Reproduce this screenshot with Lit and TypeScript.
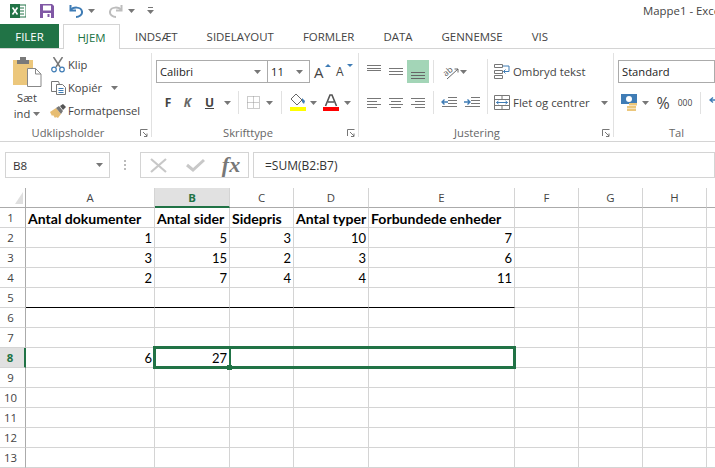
import { LitElement, html, css, svg } from "lit";
import { customElement } from "lit/decorators.js";
import { classMap } from "lit/directives/class-map.js";

const caret = html`<svg class="caret" width="7" height="4" viewBox="0 0 7 4"><path d="M0 0h7L3.5 4z" fill="#777"/></svg>`;
const lines = (rows: [number, number, number][], color = "#777") =>
  html`<svg width="16" height="14" viewBox="0 0 16 14" fill="none" stroke=${color} stroke-width="1">${rows.map(([y, a, b]) => svg`<path d="M${a} ${y + 0.5}H${b}"/>`)}</svg>`;
const launcher = html`<svg class="launcher" width="8" height="8" viewBox="0 0 8 8" fill="none" stroke="#777"><path d="M.5 7V.5H7.5"/><path d="M3 3l4 4M7 4.5V7.5H4" /></svg>`;

const COLS = [
  { l: "A", w: 129 }, { l: "B", w: 75 }, { l: "C", w: 64 }, { l: "D", w: 75 },
  { l: "E", w: 146 }, { l: "F", w: 64 }, { l: "G", w: 64 }, { l: "H", w: 64 }, { l: "", w: 20 },
];
const DATA: Record<number, (string | number)[]> = {
  1: ["Antal dokumenter", "Antal sider", "Sidepris", "Antal typer", "Forbundede enheder"],
  2: [1, 5, 3, 10, 7],
  3: [3, 15, 2, 3, 6],
  4: [2, 7, 4, 4, 11],
  8: [6, 27],
};

@customElement("app-root")
export class AppRoot extends LitElement {
  static styles = css`
    :host { display: block; width: 715px; height: 468px; overflow: hidden; background: #fff; position: relative;
      font-family: "Open Sans", "Noto Sans", sans-serif; font-size: 11.2px; color: #444; }
    svg { display: block; flex: none; }
    .title { height: 24px; display: flex; align-items: center; position: relative; }
    .qat { display: grid; grid-template-columns: 10px 16px 14px 14px 15px 14px 16px 10px 14px 16px 7px 8px; place-items: center; padding-top: 1px; margin-top: -4px; }
    .doc-title { position: absolute; left: 643px; top: 3px; white-space: nowrap; font-size: 11.4px; color: #444; }
    .tabs { height: 24px; display: flex; border-bottom: 1px solid #d4d4d4; font-size: 11.45px; position: relative; }
    .tab { display: flex; align-items: center; justify-content: center; height: 24px; box-sizing: border-box; flex: none; }
    .filer { width: 59px; background: #217346; color: #fff; margin-right: 4px; }
    .hjem { width: 57px; height: 25px; border: 1px solid #d4d4d4; border-bottom: none; background: #fff; color: #217346; margin-right: 15px; position: relative; z-index: 1; }
    .tab.plain { margin-right: 29px; }
    .ribbon { height: 92px; display: flex; border-bottom: 1px solid #d4d4d4; }
    .group { position: relative; display: flex; flex-direction: column; box-sizing: border-box; margin-top: 4px; height: 84px; border-right: 1px solid #e1e1e1; flex: none; }
    .g1 { width: 152px; } .g2 { width: 207px; } .g3 { width: 255px; } .g4 { flex: 1 1 0; min-width: 0; border-right: none; }
    .body { flex: 1; min-height: 0; display: flex; }
    .label { height: 17px; line-height: 17px; margin-bottom: -4px; text-align: center; color: #666; font-size: 11.2px; }
    .g1 .label { padding-right: 15px; } .g2 .label { padding-right: 14px; } .g3 .label { padding-right: 18px; } .g4 .label { padding-left: 24px; }
    .launcher { position: absolute; right: 3px; bottom: 0; }
    .paste { width: 50px; display: flex; flex-direction: column; align-items: center; padding: 4px 0 0 4px; box-sizing: border-box; }
    .paste .txt { text-align: center; line-height: 16px; margin-top: 3px; }
    .paste .ind { display: flex; align-items: center; justify-content: center; gap: 3px; }
    .clip { display: flex; flex-direction: column; }
    .clip-row { height: 23px; display: flex; align-items: center; gap: 2px; white-space: nowrap; }
    .clip-row .ic { width: 16px; display: flex; justify-content: center; }
    .clip-row .caret { margin-left: 7px; }
    .col { display: flex; flex-direction: column; }
    .combos { display: flex; padding: 7px 0 0 4px; align-items: center; }
    .combo { height: 23px; box-sizing: border-box; border: 1px solid #ababab; display: flex; align-items: center; justify-content: space-between; padding: 0 6px 0 3px;
      font-size: 11.2px; color: #222; background: #fff; }
    .font { width: 112px; } .size { width: 43px; margin-left: -1px; }
    .std { width: 120px; }
    .grow { display: flex; align-items: center; gap: 8px; margin-left: 4px; }
    .growA { position: relative; font-size: 15px; line-height: 16px; width: 14px; color: #444; }
    .growB { font-size: 12px; }
    .tri { position: absolute; right: -3px; top: 0; }
    .fontrow { display: grid; grid-template-columns: 20px 19px 25px 10px 12px 18px 15px 9px 23px 9px 25px 9px; place-items: center; padding: 8px 0 0 6px; height: 23px; }
    .b { font-weight: 700; font-size: 12px; color: #444; }
    .k { font-style: italic; font-weight: 700; font-size: 12px; color: #666; }
    .u { font-weight: 700; font-size: 12px; color: #444; text-decoration: underline; }
    .sep { width: 1px; height: 23px; background: #e1e1e1; }
    .aligns { display: grid; grid-template-columns: 22px 22px 22px 4px 1px 6px 20px 7px; grid-auto-rows: 23px; row-gap: 8px; place-items: center; padding: 7px 0 0 4px; align-content: start; }
    .al-on { background: #a3d5b7; width: 22px; height: 23px; display: flex; align-items: center; justify-content: center; }
    .indent { grid-column: 7 / 9; display: flex; gap: 7px; justify-self: start; margin-left: 1px; }
    .tallsep { width: 1px; height: 55px; background: #e1e1e1; margin: 6px 0 0 20px; }
    .wrap { display: flex; flex-direction: column; gap: 8px; padding: 7px 0 0 6px; }
    .wrap-row { display: flex; align-items: center; height: 23px; gap: 3px; white-space: nowrap; font-size: 11.4px; }
    .wrap-row .caret { margin-left: 8px; }
    .talrow { display: grid; grid-template-columns: 22px 10px 26px 18px 12px 20px; place-items: center; padding: 8px 0 0 4px; height: 23px; }
    .pct { font-size: 16px; color: #444; }
    .k000 { font-size: 8.5px; color: #444; }
    .sep22 { width: 1px; height: 22px; background: #e1e1e1; }
    .orient { overflow: visible; }
    .abtxt { font-family: "Open Sans", sans-serif; font-size: 8.5px; fill: #555; }
    .fbar { height: 46px; display: flex; align-items: center; box-sizing: border-box; padding: 10px 0 10px 5px; }
    .name, .fxbox, .fx { height: 26px; box-sizing: border-box; border: 1px solid #d4d4d4; display: flex; align-items: center; background: #fff; }
    .name { width: 105px; padding: 0 6px 0 7px; justify-content: space-between; color: #333; font-size: 11.6px; }
    .dots { width: 30px; display: flex; flex-direction: column; align-items: center; gap: 2px; }
    .dots i { width: 2px; height: 2px; background: #bbb; display: block; }
    .fxbox { width: 109px; display: grid; grid-template-columns: 35px 38px 34px; place-items: center; }
    .fxt { font-family: "Liberation Serif", serif; font-style: italic; font-weight: 700; font-size: 22px; line-height: 22px; color: #777; }
    .fx { flex: 1; margin-left: 4px; padding-left: 11px; color: #333; font-size: 12px; }
    .sheet { display: grid; grid-auto-rows: 20px; position: relative; grid-template-columns: 26px 129px 75px 64px 75px 146px 64px 64px 64px 20px; font-family: Lato, "Liberation Sans", sans-serif; font-size: 13px; color: #000; }
    .cell { box-sizing: border-box; border-right: 1px solid #d4d4d4; border-bottom: 1px solid #d4d4d4; padding: 0 2px; line-height: 20px; white-space: nowrap; overflow: visible; }
    .num { text-align: right; }
    .bold { font-weight: 700; font-size: 14.05px; line-height: 21px; }
    .line { border-bottom-color: #000; }
    .rh { border-right-color: #ababab; text-align: center; padding: 0 4px 0 0; color: #444; font-family: "Open Sans", sans-serif; font-size: 11.4px; }
    .ch { border-bottom-color: #ababab; text-align: center; color: #444; font-family: "Open Sans", sans-serif; font-size: 11.4px; line-height: 19px; }
    .corner { position: relative; border-right-color: #ababab; border-bottom-color: #ababab; padding: 0; }
    .corner svg { position: absolute; left: 15px; top: 4px; }
    .ch.on { background: #e1e1e1; color: #217346; font-weight: 700; border-bottom: 2px solid #217346; }
    .rh.on { background: #e1e1e1; color: #217346; font-weight: 700; border-right: 2px solid #217346; }
    .sel { position: absolute; left: 153px; top: 158px; width: 363px; height: 23px; box-sizing: border-box; border: 3px solid #217346; pointer-events: none; }
    .sel-mid { position: absolute; left: 73px; top: 0; width: 2px; height: 17px; background: #217346; }
    .sel-h { position: absolute; left: 71px; top: 16px; width: 5px; height: 5px; background: #217346; }
  `;

  private cells() {
    const out = [];
    out.push(html`<div class="cell corner"><svg width="8" height="12" viewBox="0 0 8 12"><path d="M8 0v12H0z" fill="#dfdfdf"/></svg></div>`);
    COLS.forEach((c) => out.push(html`<div class=${classMap({ cell: true, ch: true, on: c.l === "B" })}>${c.l}</div>`));
    for (let r = 1; r <= 13; r++) {
      out.push(html`<div class=${classMap({ cell: true, rh: true, on: r === 8 })}>${r}</div>`);
      COLS.forEach((_, i) => {
        const v = DATA[r]?.[i];
        out.push(html`<div class=${classMap({
          cell: true,
          bold: r === 1,
          num: typeof v === "number",
          line: r === 5 && i < 5,
        })}>${v ?? ""}</div>`);
      });
    }
    return out;
  }

  render() {
    return html`
      <div class="title">
        <div class="qat">
          <span></span>
          <svg width="16" height="14" viewBox="0 0 16 14"><rect x="6" y="1" width="10" height="12" fill="#fff" stroke="#217346"/><path d="M10 4h4M10 7h4M10 10h4" stroke="#217346"/><rect y="0" width="10" height="14" fill="#217346"/><path d="M2.5 3.5l5 7M7.5 3.5l-5 7" stroke="#fff" stroke-width="1.6"/></svg>
          <span></span>
          <svg width="14" height="14" viewBox="0 0 14 14"><path d="M0 0h12l2 2v12H0z" fill="#8058a5"/><rect x="3" y="1.5" width="8" height="5" fill="#fff"/><rect x="3" y="9" width="8" height="5" fill="#fff"/><rect x="7.5" y="10" width="2" height="3" fill="#8058a5"/></svg>
          <span></span>
          <svg width="14" height="14" viewBox="0 0 14 14" fill="none" stroke="#3f7cb5" stroke-width="2"><path d="M1.5 6.5C4 2.5 12 2.5 13 7.5 13.5 11 10 13 7 13"/><path d="M1.5 1v5.5H7" /></svg>
          ${caret}
          <span></span>
          <svg width="14" height="14" viewBox="0 0 14 14" fill="none" stroke="#bdbdbd" stroke-width="2"><path d="M12.5 6.5C10 2.5 2 2.5 1 7.5.5 11 4 13 7 13"/><path d="M12.5 1v5.5H7"/></svg>
          ${caret}
          <span></span>
          <svg width="7" height="8" viewBox="0 0 7 8"><path d="M1 .5h5" stroke="#777"/><path d="M0 3h7L3.5 7z" fill="#777"/></svg>
        </div>
        <div class="doc-title">Mappe1 - Excel</div>
      </div>
      <div class="tabs">
        <div class="tab filer">FILER</div>
        <div class="tab hjem">HJEM</div>
        ${["INDSÆT", "SIDELAYOUT", "FORMLER", "DATA", "GENNEMSE", "VIS"].map((t) => html`<div class="tab plain">${t}</div>`)}
      </div>
      <div class="ribbon">
        <div class="group g1">
          <div class="body">
            <div class="paste">
              <svg width="29" height="30" viewBox="0 0 29 30"><rect x="0" y="3" width="20" height="25" fill="#ecc77c"/><path d="M7 3V0h6v3h3v4H4V3z" fill="#7a7a7a"/><path d="M14.5 11.5h8l5.500 5.500v12.500h-13.500z" fill="#fff" stroke="#888"/><path d="M22.500 11.500v5.500h5.500" fill="none" stroke="#888"/></svg>
              <div class="txt">Sæt<div class="ind">ind ${caret}</div></div>
            </div>
            <div class="clip">
              <div class="clip-row"><span class="ic"><svg width="14" height="16" viewBox="0 0 14 16" fill="none"><path d="M2.500 0l6.500 10M11.500 0L5 10" stroke="#777" stroke-width="1.500"/><circle cx="3" cy="12.500" r="2.300" stroke="#3f7cb5" stroke-width="1.200"/><circle cx="11" cy="12.500" r="2.300" stroke="#3f7cb5" stroke-width="1.200"/></svg></span>Klip</div>
              <div class="clip-row"><span class="ic"><svg width="15" height="14" viewBox="0 0 15 14" fill="none"><path d="M5.500 10.500H.5V.5h7l1 3" stroke="#777"/><path d="M5.500 3.500h6l3 3v7h-9z" fill="#fff" stroke="#777"/><path d="M7.500 7.500h5M7.500 9.500h5M7.500 11.500h5" stroke="#3f7cb5"/></svg></span>Kopiér ${caret}</div>
              <div class="clip-row"><span class="ic"><svg width="16" height="14" viewBox="0 0 16 14"><path d="M0 8l6-4 5 6-3 4-2-1-1 1-2-3-1 1z" fill="#e7bd72"/><path d="M6 4l5 6 2-3-4-5z" fill="#777"/><path d="M10 2l3-2 3 3-3 3z" fill="#555"/></svg></span>Formatpensel</div>
            </div>
          </div>
          <div class="label">Udklipsholder</div>${launcher}
        </div>
        <div class="group g2">
          <div class="body col">
            <div class="combos">
              <div class="combo font">Calibri ${caret}</div>
              <div class="combo size">11 ${caret}</div>
              <div class="grow">
                <div class="growA">A<svg class="tri" width="6" height="3" viewBox="0 0 6 3"><path d="M0 3h6L3 0z" fill="#3f7cb5"/></svg></div>
                <div class="growA growB">A<svg class="tri" width="6" height="3" viewBox="0 0 6 3"><path d="M0 0h6L3 3z" fill="#3f7cb5"/></svg></div>
              </div>
            </div>
            <div class="fontrow">
              <span class="b">F</span><span class="k">K</span><span class="u">U</span>${caret}<span class="sep"></span>
              <svg width="13" height="13" viewBox="0 0 13 13" fill="none" stroke="#999" stroke-dasharray="1 1"><path d="M.5.500h12v12H.5zM.5 6.500h12M6.500.500v12"/></svg>
              ${caret}<span class="sep"></span>
              <svg width="16" height="19" viewBox="0 0 16 19"><path d="M6 1l6 6-5 5-6-6z" fill="#fff" stroke="#666"/><path d="M12 5l3 3-1 3-2-2z" fill="#3f7cb5"/><rect y="14" width="16" height="4" fill="#ffff00"/></svg>
              ${caret}
              <svg width="16" height="19" viewBox="0 0 16 19"><path d="M2.500 13L7 2h2l4.500 11M5 9h6" fill="none" stroke="#555" stroke-width="1.600"/><rect y="14" width="16" height="4" fill="#ff0000"/></svg>
              ${caret}
            </div>
          </div>
          <div class="label">Skrifttype</div>${launcher}
        </div>
        <div class="group g3">
          <div class="body">
            <div class="aligns">
              ${lines([[0, 1, 15], [3, 1, 15], [5, 1, 15]])}
              ${lines([[3, 1, 15], [6, 1, 15], [9, 1, 15]])}
              <div class="al-on">${lines([[7, 1, 15], [10, 1, 15], [13, 1, 15]], "#666")}</div>
              <span></span><span class="sep"></span><span></span>
              <svg class="orient" width="18" height="16" viewBox="0 0 18 16" fill="none"><text class="abtxt" x="2" y="11" transform="rotate(-40 6 8)">ab</text><path d="M6 15L17 5" stroke="#666"/><path d="M13.500 5H17v3.500" stroke="#666"/></svg>
              ${caret}
              ${lines([[2, 1, 15], [5, 1, 11], [8, 1, 15], [11, 1, 11]])}
              ${lines([[2, 1, 15], [5, 3, 13], [8, 1, 15], [11, 3, 13]])}
              ${lines([[2, 1, 15], [5, 5, 15], [8, 1, 15], [11, 5, 15]])}
              <span></span><span class="sep"></span><span></span>
              <div class="indent">
                <svg width="16" height="12" viewBox="0 0 16 12" fill="none" stroke="#777"><path d="M7 .5h9M7 3.500h9M7 6.500h9M1 9.500h15"/><path d="M7 5H1M3.500 2.500L1 5l2.500 2.500" stroke="#3f7cb5" stroke-width="1.400"/></svg>
                <svg width="16" height="12" viewBox="0 0 16 12" fill="none" stroke="#777"><path d="M7 .5h9M7 3.500h9M7 6.500h9M1 9.500h15"/><path d="M0 5h6M3.500 2.500L6 5 3.500 7.500" stroke="#3f7cb5" stroke-width="1.400"/></svg>
              </div>
            </div>
            <div class="tallsep"></div>
            <div class="wrap">
              <div class="wrap-row"><svg width="16" height="15" viewBox="0 0 16 15" fill="none" stroke="#777"><path d="M.5.500h8v3h-8zM.5 6.500h8v3h-8zM.5 11.500h8v3h-8z"/><path d="M9 2h6v5.500H9.500M11.500 5.500l-2 2 2 2" stroke="#3f7cb5"/></svg>Ombryd tekst</div>
              <div class="wrap-row"><svg width="16" height="15" viewBox="0 0 16 15" fill="none" stroke="#777"><path d="M.5.500h15v14H.5zM.5 4.500h15M.5 10.500h15M8 .500v4M8 10.500v4"/><path d="M2.500 7.500h11M4.500 6l-2 1.500 2 1.500M11.500 6l2 1.500-2 1.500" stroke="#3f7cb5"/></svg>Flet og centrer ${caret}</div>
            </div>
          </div>
          <div class="label">Justering</div>${launcher}
        </div>
        <div class="group g4">
          <div class="body col">
            <div class="combos"><div class="combo std">Standard</div></div>
            <div class="talrow">
              <svg width="16" height="17" viewBox="0 0 16 17"><rect width="16" height="10" fill="#3f7cb5"/><circle cx="8" cy="5" r="3" fill="#fff"/><rect x="8" y="9" width="8" height="2.500" fill="#ecc77c"/><rect x="6" y="12" width="9" height="2.500" fill="#ecc77c"/><rect x="6" y="15" width="9" height="2" fill="#ecc77c"/></svg>
              ${caret}
              <span class="pct">%</span>
              <span class="k000">000</span>
              <span class="sep22"></span>
              <svg width="14" height="14" viewBox="0 0 14 14" fill="none"><path d="M1 4h8M4 1.500L1 4l3 2.500" stroke="#3f7cb5" stroke-width="1.400"/></svg>
            </div>
          </div>
          <div class="label">Tal</div>
        </div>
      </div>
      <div class="fbar">
        <div class="name">B8 ${caret}</div>
        <div class="dots"><i></i><i></i><i></i></div>
        <div class="fxbox">
          <svg width="17" height="15" viewBox="0 0 17 15" fill="none" stroke="#c8c8c8" stroke-width="2.200"><path d="M1 1l15 13M16 1L1 14"/></svg>
          <svg width="19" height="14" viewBox="0 0 19 14" fill="none" stroke="#c8c8c8" stroke-width="3"><path d="M1 7l6 5L18 2"/></svg>
          <span class="fxt">fx</span>
        </div>
        <div class="fx">=SUM(B2:B7)</div>
      </div>
      <div class="sheet">
        ${this.cells()}
        <div class="sel"><div class="sel-mid"></div><div class="sel-h"></div></div>
      </div>
    `;
  }
}
